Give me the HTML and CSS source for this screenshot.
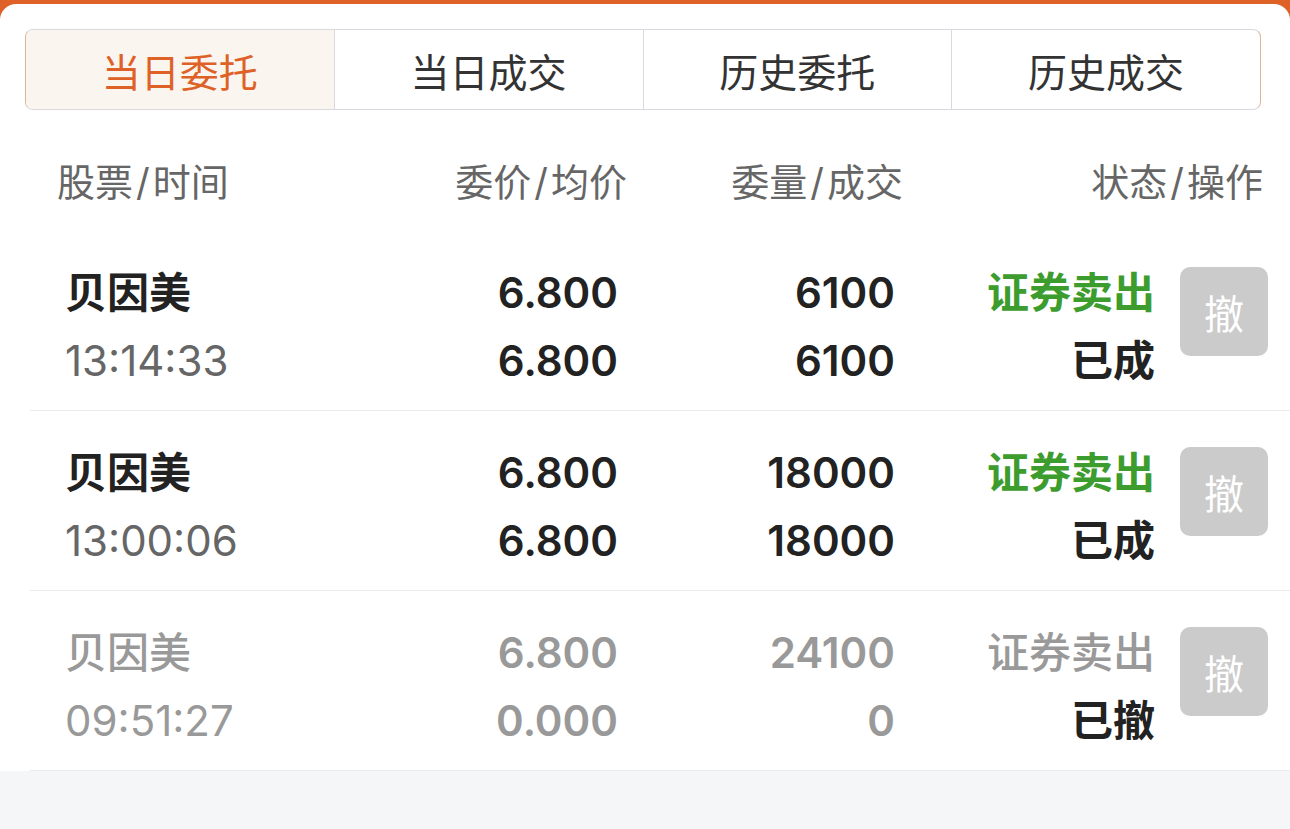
FILE: index.html
```html
<!DOCTYPE html>
<html lang="zh-CN">
<head>
  <meta charset="UTF-8">
  <meta name="viewport" content="width=device-width, initial-scale=1.0">
  <title>当日委托</title>
  <link rel="stylesheet" href="styles.css">
</head>
<body>
  <div class="top-bar"></div>
  <div class="panel">
    <div class="tabs">
      <div class="tab active">当日委托</div>
      <div class="tab">当日成交</div>
      <div class="tab">历史委托</div>
      <div class="tab">历史成交</div>
    </div>

    <div class="list-head">
      <span>股票<i>/</i>时间</span>
      <span class="right">委价<i>/</i>均价</span>
      <span class="right">委量<i>/</i>成交</span>
      <span class="right">状态<i>/</i>操作</span>
    </div>

    <div class="order">
      <div class="cell">
        <div class="name">贝因美</div>
        <div class="time">13:14:33</div>
      </div>
      <div class="cell right num">
        <div>6.800</div>
        <div>6.800</div>
      </div>
      <div class="cell right num">
        <div>6100</div>
        <div>6100</div>
      </div>
      <div class="cell right status">
        <div class="sell">证券卖出</div>
        <div class="state">已成</div>
      </div>
      <button class="cancel">撤</button>
    </div>

    <div class="order">
      <div class="cell">
        <div class="name">贝因美</div>
        <div class="time">13:00:06</div>
      </div>
      <div class="cell right num">
        <div>6.800</div>
        <div>6.800</div>
      </div>
      <div class="cell right num">
        <div>18000</div>
        <div>18000</div>
      </div>
      <div class="cell right status">
        <div class="sell">证券卖出</div>
        <div class="state">已成</div>
      </div>
      <button class="cancel">撤</button>
    </div>

    <div class="order done">
      <div class="cell">
        <div class="name">贝因美</div>
        <div class="time">09:51:27</div>
      </div>
      <div class="cell right num">
        <div>6.800</div>
        <div>0.000</div>
      </div>
      <div class="cell right num">
        <div>24100</div>
        <div>0</div>
      </div>
      <div class="cell right status">
        <div class="sell">证券卖出</div>
        <div class="state">已撤</div>
      </div>
      <button class="cancel">撤</button>
    </div>
  </div>
</body>
</html>
```

FILE: styles.css
```css
body {
  margin: 0;
  background-color: #f5f6f8;
  font-family: Inter, "Noto Sans CJK SC", sans-serif;
  color: #222;
}
.top-bar {
  height: 20px;
  background-color: #de6128;
}
.panel {
  margin-top: -16px;
  background-color: #fff;
  border-radius: 16px 16px 0 0;
  padding-top: 25px;
}
.tabs {
  display: flex;
  height: 81px;
  box-sizing: border-box;
  margin: 0 29px 0 25px;
  border: 1px solid #d8d8de;
  border-left-color: #dcb49c;
  border-right-color: #dcb49c;
  border-radius: 8px;
  overflow: hidden;
}
.tab {
  flex: 1;
  display: flex;
  align-items: center;
  justify-content: center;
  font-size: 39px;
  color: #333;
  border-left: 1px solid #d8d8de;
}
.tab:first-child {
  border-left: none;
}
.tab.active {
  background-color: #fbf5f0;
  color: #de6128;
}
.list-head {
  display: grid;
  grid-template-columns: 270px 300px 276px 360px;
  padding: 47px 0 24px 57px;
  font-size: 38px;
  line-height: 50px;
  color: #666;
}
.list-head i {
  font-style: normal;
  margin: 0 3px;
}
.right {
  text-align: right;
}
.order {
  display: grid;
  grid-template-columns: 251px 300px 277px 260px 88px;
  align-items: start;
  height: 180px;
  box-sizing: border-box;
  margin-left: 30px;
  padding: 28px 0 0 37px;
  border-bottom: 1px solid #ebebeb;
  font-size: 42px;
  line-height: 68px;
}
.name {
  font-weight: 700;
  margin-left: -2px;
}
.time {
  color: #666;
  margin-left: -2px;
}
.num {
  font-weight: 600;
}
.status {
  font-weight: 700;
}
.sell {
  color: #3d9c2e;
}
.cancel {
  width: 88px;
  height: 89px;
  margin: 8px 0 0 25px;
  border: none;
  border-radius: 10px;
  background-color: #cbcbcb;
  color: #fff;
  font-family: "Noto Sans CJK SC", sans-serif;
  font-size: 40px;
  padding: 0;
}
.done .name,
.done .time,
.done .num,
.done .sell {
  color: #999;
}
.done .name {
  font-weight: 500;
}
.done .sell {
  font-weight: 500;
}
```
